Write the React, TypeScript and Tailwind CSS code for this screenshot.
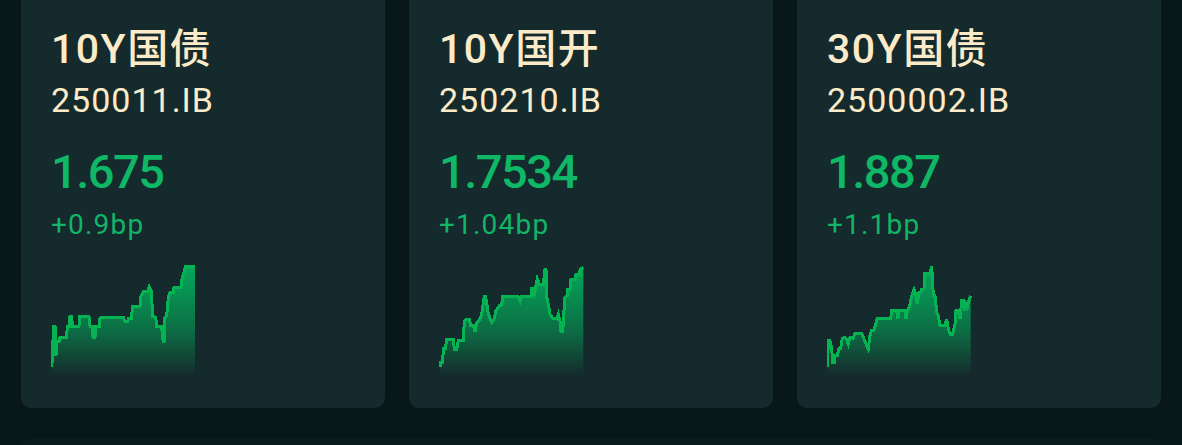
import React from "react"

type Bond = {
  name: string
  code: string
  yield: string
  change: string
  points: number[][]
}

const bonds: Bond[] = [
  {
    name: "10Y国债",
    code: "250011.IB",
    yield: "1.675",
    change: "+0.9bp",
    points: [
      [0.7, 102], [1.7, 90.7], [2.3, 61], [4, 61], [5, 90.7], [5.7, 77], [8, 76.7], [9, 72], [15.7, 72],
      [16.3, 61], [18.3, 61], [19, 51.7], [20.7, 51.7], [21.3, 61], [28, 61], [28.7, 51.7], [38, 51.7],
      [39, 61], [41.3, 61], [42, 72], [44, 72], [44.7, 61], [48.3, 61], [49, 53], [52.3, 52.3], [72.3, 52.3],
      [74, 56.7], [76.7, 56.7], [77.3, 53.3], [80.7, 53.3], [81.3, 41.3], [89, 41.3], [89.7, 31.7],
      [92.3, 26.7], [96.7, 26.7], [98.3, 21.7], [100.7, 26.7], [101.3, 51.3], [104.7, 52.3], [105.7, 61.7],
      [110.7, 61.7], [111.7, 74], [113, 77.3], [114, 52.3], [115.7, 50.7], [117.3, 32.3], [119, 27.3],
      [122.3, 27.3], [123, 22.3], [130, 22.3], [131.3, 12.3], [133, 7.3], [134.7, 1.3], [144, 1.3],
    ],
  },
  {
    name: "10Y国开",
    code: "250210.IB",
    yield: "1.7534",
    change: "+1.04bp",
    points: [
      [1, 102.3], [1, 97.3], [3.7, 97.3], [4.3, 83.3], [6.7, 83.3], [7.3, 74.7], [14.3, 74.7], [15.3, 84],
      [17.7, 84], [19.3, 75.7], [24.3, 75.7], [25.3, 56.7], [27, 54], [30.3, 54], [31.7, 60.7], [34.3, 60.7],
      [36, 66.7], [37.7, 58], [41, 54], [42.7, 49], [45.3, 31.7], [46.7, 31.7], [49.3, 49], [52.7, 57.3],
      [55, 54], [57, 45.7], [60.3, 40.7], [62.7, 40], [63.7, 31.7], [79.3, 31.7], [81, 35.7], [82, 31.7],
      [92, 31.7], [93, 22.3], [95.3, 29], [98.3, 14], [100.3, 19], [104.3, 19], [106, 4.7], [107, 4.7],
      [107.7, 32.3], [109.3, 39], [111, 49], [113.7, 53.3], [117.7, 54], [119.3, 49], [121, 55.7], [122, 66.7],
      [123.7, 66.7], [125, 45.7], [126, 32.3], [128.3, 30.7], [128.7, 24], [131, 24], [132, 14.7], [136, 14.7],
      [137, 9], [140.3, 9], [141, 4.7], [144.3, 2.3],
    ],
  },
  {
    name: "30Y国债",
    code: "2500002.IB",
    yield: "1.887",
    change: "+1.1bp",
    points: [
      [0.3, 102.3], [1.3, 75.7], [3, 75.7], [4.7, 84], [5.7, 97.3], [7.3, 97.3], [8, 90.7], [10.3, 90.7],
      [12, 83.3], [13.7, 83.3], [15.3, 73.3], [18, 72.3], [19.7, 74.7], [21.3, 79], [23, 72.3], [26.3, 73.3],
      [28, 68.3], [34.7, 68.3], [36.3, 72.3], [39.7, 80.7], [41.3, 84], [43, 70.7], [44.7, 65], [47, 65],
      [50.3, 53.3], [63.7, 53.3], [64.7, 45.7], [69.7, 45.7], [70.7, 54], [72.3, 45.7], [78, 45.7], [79, 54],
      [80.3, 45.7], [82.3, 42.3], [84.7, 30.7], [87, 24.7], [89, 30.7], [90.3, 39], [92, 27.3], [93.7, 27.3],
      [94.7, 24], [97, 24], [97.3, 8.3], [103, 8.3], [104.7, 1.3], [106.3, 30.7], [108, 30.7], [109.7, 47.3],
      [111.3, 50.7], [113, 60.7], [118, 60.7], [119.7, 54], [121.3, 64], [123, 69], [125.7, 69], [128, 59],
      [129, 45.7], [131.3, 45.7], [133, 54], [134.7, 35.7], [136.3, 35.7], [137.3, 45.7], [138.7, 39],
      [140.3, 42.3], [141.3, 37.3], [143.7, 30.7],
    ],
  },
]

function Sparkline({ points, id }: { points: number[][]; id: string }) {
  const line = points.map(([x, y], i) => `${i === 0 ? "M" : "L"}${x} ${y}`).join(" ")
  const last = points[points.length - 1]
  const area = `${line} L${last[0]} 110 L${points[0][0]} 110 Z`

  return (
    <svg width="145" height="110" viewBox="0 0 145 110" className="block">
      <defs>
        <linearGradient id={id} x1="0" y1="0" x2="0" y2="110" gradientUnits="userSpaceOnUse">
          <stop offset="0%" stopColor="#04aa5b" />
          <stop offset="60%" stopColor="#0c6d44" />
          <stop offset="100%" stopColor="#152c2d" />
        </linearGradient>
      </defs>
      <path d={area} fill={`url(#${id})`} />
      <path d={line} fill="none" stroke="#06b353" strokeWidth="3" strokeLinejoin="miter" shapeRendering="crispEdges" />
    </svg>
  )
}

export default function App() {
  return (
    <div className="min-h-[445px] bg-[#081717] px-[21px] font-[Roboto,'Noto_Sans_CJK_SC',sans-serif] overflow-hidden">
      <div className="grid grid-cols-3 gap-6">
        {bonds.map((bond, i) => (
          <div key={bond.code} className="bg-[#152a2c] rounded-b-[10px] pl-[30px] pt-[29px] pb-[33px]">
            <p className="text-[41px] leading-[40px] font-medium tracking-[1.5px] text-[#fcebc9]">{bond.name}</p>
            <p className="mt-[14px] text-[34px] leading-[34px] tracking-[1px] text-[#fcebc9]">{bond.code}</p>
            <p className="mt-[31px] text-[47px] leading-[48px] font-medium tracking-[-1.5px] text-[#0fb867]">{bond.yield}</p>
            <p className="mt-[16px] text-[28px] leading-[26px] tracking-[1.2px] text-[#12b467]">{bond.change}</p>
            <div className="mt-[27px]">
              <Sparkline points={bond.points} id={`fill-${i}`} />
            </div>
          </div>
        ))}
      </div>
      <div className="mt-[30px] h-24 rounded-t-[10px] bg-[#0b1b1b]" />
    </div>
  )
}
